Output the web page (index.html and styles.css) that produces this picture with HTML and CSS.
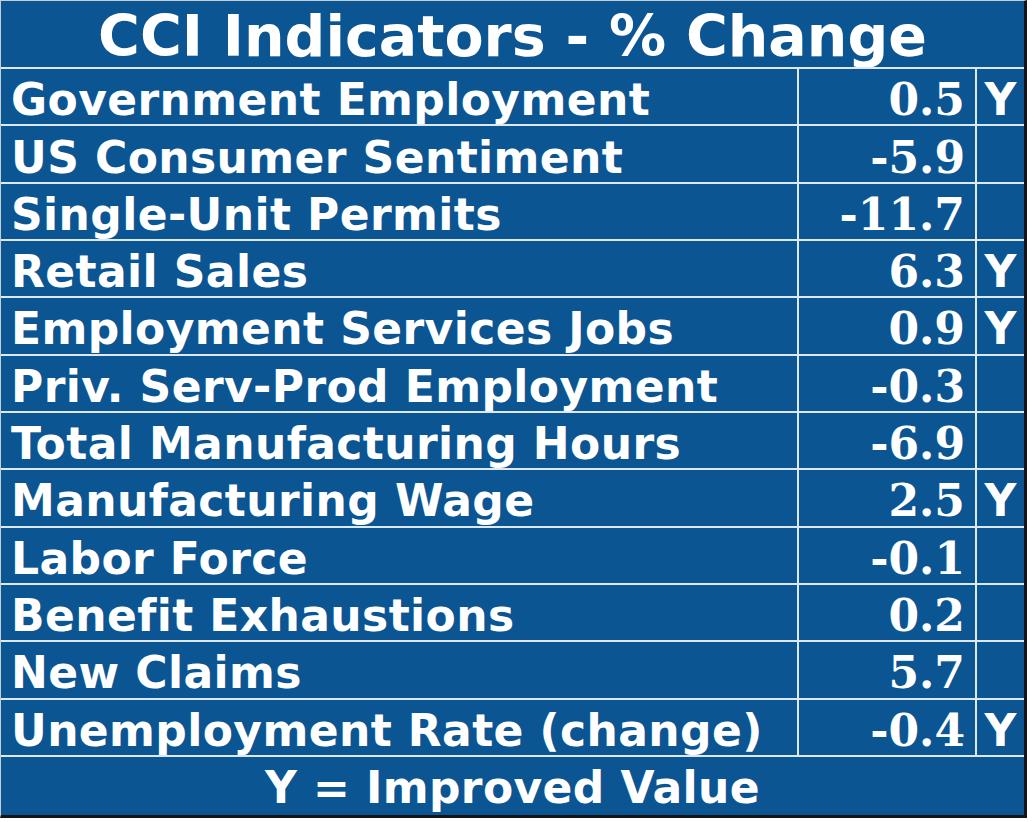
FILE: index.html
```html
<!DOCTYPE html>
<html lang="en">
<head>
<meta charset="utf-8">
<title>CCI Indicators - % Change</title>
<link rel="stylesheet" href="styles.css">
</head>
<body>
<div class="board">
  <div class="grid">
    <div class="cell title">CCI Indicators - % Change</div>

    <div class="cell label">Government Employment</div>
    <div class="cell num">0.5</div>
    <div class="cell flag">Y</div>

    <div class="cell label">US Consumer Sentiment</div>
    <div class="cell num">-5.9</div>
    <div class="cell flag"></div>

    <div class="cell label">Single-Unit Permits</div>
    <div class="cell num">-11.7</div>
    <div class="cell flag"></div>

    <div class="cell label">Retail Sales</div>
    <div class="cell num">6.3</div>
    <div class="cell flag">Y</div>

    <div class="cell label">Employment Services Jobs</div>
    <div class="cell num">0.9</div>
    <div class="cell flag">Y</div>

    <div class="cell label">Priv. Serv-Prod Employment</div>
    <div class="cell num">-0.3</div>
    <div class="cell flag"></div>

    <div class="cell label">Total Manufacturing Hours</div>
    <div class="cell num">-6.9</div>
    <div class="cell flag"></div>

    <div class="cell label">Manufacturing Wage</div>
    <div class="cell num">2.5</div>
    <div class="cell flag">Y</div>

    <div class="cell label">Labor Force</div>
    <div class="cell num">-0.1</div>
    <div class="cell flag"></div>

    <div class="cell label">Benefit Exhaustions</div>
    <div class="cell num">0.2</div>
    <div class="cell flag"></div>

    <div class="cell label">New Claims</div>
    <div class="cell num">5.7</div>
    <div class="cell flag"></div>

    <div class="cell label">Unemployment Rate (change)</div>
    <div class="cell num">-0.4</div>
    <div class="cell flag">Y</div>

    <div class="cell footer">Y = Improved Value</div>
  </div>
</div>
</body>
</html>
```

FILE: styles.css
```css
html, body {
  margin: 0;
  padding: 0;
  background: #ffffff;
}

.board {
  width: 1023px;
  background: #0b5592;
  border-top: 1px solid #c4ccd4;
  border-left: 1px solid #c4ccd4;
  border-right: 3px solid #111418;
  border-bottom: 3px solid #111418;
}

.grid {
  display: grid;
  grid-template-columns: 798px 178px 47px;
  grid-template-rows: 68px repeat(12, 57.33px) 58px;
  color: #ffffff;
  font-family: "DejaVu Sans", Verdana, sans-serif;
  font-weight: bold;
}

.cell {
  box-sizing: border-box;
  display: flex;
  align-items: center;
  padding-top: 6px;
  white-space: nowrap;
  overflow: hidden;
}

.title {
  grid-column: 1 / 4;
  justify-content: center;
  font-size: 57px;
  border-bottom: 2px solid #dde8f2;
  padding-top: 4px;
}

.label {
  font-size: 44px;
  letter-spacing: 0.4px;
  padding-left: 10px;
  border-right: 2px solid #dde8f2;
  border-bottom: 2px solid #dde8f2;
}

.num {
  font-family: "DejaVu Serif", "Liberation Serif", serif;
  font-size: 44px;
  justify-content: flex-end;
  padding-right: 10px;
  border-right: 2px solid #dde8f2;
  border-bottom: 2px solid #dde8f2;
}

.flag {
  font-size: 44px;
  justify-content: center;
  border-bottom: 2px solid #dde8f2;
}

.footer {
  grid-column: 1 / 4;
  justify-content: center;
  font-size: 44px;
  letter-spacing: 0.4px;
  padding-top: 4px;
}
```
